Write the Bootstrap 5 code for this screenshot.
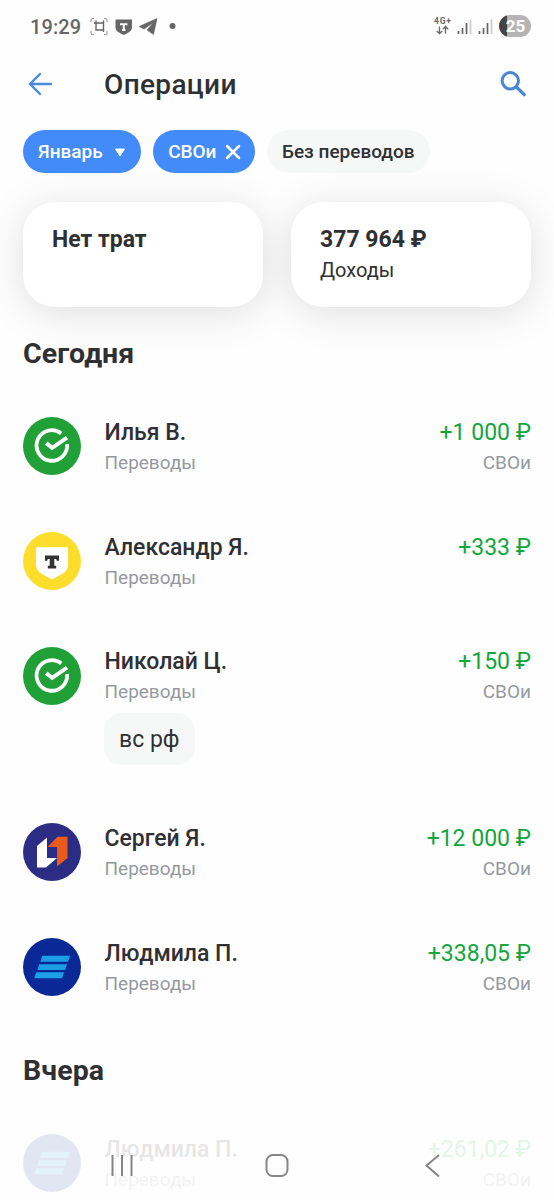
<!DOCTYPE html>
<html lang="ru">
<head>
<meta charset="utf-8">
<meta name="viewport" content="width=device-width, initial-scale=1">
<title>Операции</title>
<link href="https://cdn.jsdelivr.net/npm/bootstrap@5.3.0/dist/css/bootstrap.min.css" rel="stylesheet">
<style>
  body { font-family: Roboto, "Noto Sans", sans-serif; color: #2f3033; background: #fefefe; }
  .screen { width: 554px; height: 1200px; padding: 0 23px; }
  .screen svg { display: block; flex: none; }
  .status { height: 54px; padding: 0 0 1px 7px; color: #666; }
  .clock { font-size: 20px; line-height: 20px; letter-spacing: .1px; width: 60px; font-weight: 500; }
  .battery { width: 32px; height: 22px; margin-bottom: 2px; padding-left: 1px; font-size: 17px; line-height: 22px; letter-spacing: .1px; color: #fff; background: linear-gradient(90deg, #444 8px, #b4b4b4 8px); }
  .topbar { height: 60px; padding: 0 5px 0 5px; }
  .title { font-size: 28px; line-height: 60px; font-weight: 500; letter-spacing: .35px; margin: 1px 0 0 52px; }
  .chips { padding-top: 16px; gap: 12px; height: 88px; }
  .chip { height: 43px; padding: 0 15px; font-size: 19px; line-height: 43px; font-weight: 500; color: #fff; background: #428bf9; white-space: nowrap; }
  .chip-month { padding-right: 12.5px; }
  .chip-tag { padding-right: 12.5px; }
  .chip-plain { color: #2f3033; background: #f6f8f8; }
  .totals { gap: 28px; height: 105px; }
  .total { flex: 1; border-radius: 32px; background: #fff; padding: 22px 29px; box-shadow: 0 6px 40px rgba(0,0,0,.125); }
  .total-sum { font-size: 23px; line-height: 32px; font-weight: 700; white-space: nowrap; }
  .total-label { font-size: 20px; line-height: 28px; }
  .day { font-size: 28.5px; line-height: 80px; height: 80.6px; font-weight: 700; margin: 0; padding-top: 7px; letter-spacing: .1px; }
  .day-first { height: 80.5px; }
  .op { height: 115.3px; padding-top: 29px; gap: 23.5px; }
  .op-noted { height: 175.5px; }
  .op-noted > div { margin-top: -1.5px; }
  .op-name { font-size: 23px; line-height: 31px; font-weight: 500; }
  .op-sub { font-size: 19px; line-height: 29px; color: #9599a0; }
  .op-sum { font-size: 23px; line-height: 31px; color: #14a63c; white-space: nowrap; }
  .note { display: inline-block; margin: 7px 0 0 -.5px; height: 52px; padding: 0 15px; border-radius: 18px; background: #f6f8f8; font-size: 23px; line-height: 53px; }
  .faded { opacity: .11; }
  .sysnav { left: 0; top: 1140px; width: 554px; height: 50px; }
</style>
</head>
<body class="overflow-hidden">
<svg width="0" height="0" class="position-absolute" aria-hidden="true">
  <defs>
    <symbol id="sber" viewBox="0 0 58 58">
      <circle cx="29" cy="29" r="29" fill="#21a038"/>
      <path d="M38.300 16.400A15.300 15.300 0 1 0 44.100 27" fill="none" stroke="#fff" stroke-width="3.800"/>
      <path d="M23.200 26.200l6 4.600L44 20.700" fill="none" stroke="#fff" stroke-width="4"/>
    </symbol>
    <symbol id="tbank" viewBox="0 0 58 58">
      <circle cx="29" cy="29" r="29" fill="#ffdd2d"/>
      <path d="M13 15.300h32v17.200c0 4.200-1.800 7-5.200 9L29 47.600l-10.800-6.100c-3.400-2-5.200-4.800-5.200-9z" fill="#fff"/>
      <path d="M22 23.500h14v5.300h-2.200l-.6-1.700h-1.900v6.700h1.900v2.700h-8.400v-2.700h1.900v-6.700h-1.900l-.6 1.700H22z" fill="#333"/>
    </symbol>
    <symbol id="psb" viewBox="0 0 58 58">
      <circle cx="29" cy="29" r="29" fill="#2b2d84"/>
      <path d="M24 14.500V35h10L23 44.500H14V23z" fill="#fff"/>
      <path d="M34.500 13.800H44.500V35L34 43.500V24H24.500z" fill="#ea5b1b"/>
    </symbol>
    <symbol id="bars" viewBox="0 0 58 58">
      <circle cx="29" cy="29" r="29" fill="#0a2896"/>
      <path d="M19.300 17.800H47l-2 5.900H17.300zM16.300 26.200H44l-2 5.900H14.300zM13.300 34.300H41l-2 5.900H11.300z" fill="#1ba0e8"/>
    </symbol>
  </defs>
</svg>
<main class="screen position-relative overflow-hidden">
  <header class="status d-flex align-items-center">
    <span class="clock">19:29</span>
    <svg width="92" height="20" viewBox="0 0 92 20" fill="none" stroke="#666">
      <path d="M1 5V3q0-1.500 1.500-1.500H4M14 1.500h1.500Q17 1.500 17 3v2M17 14v2q0 1.500-1.500 1.500H14M4 17.500H2.500Q1 17.500 1 16v-2" stroke-width="1.100" stroke="#999"/>
      <path d="M6 3.500V13h7.500M4 6h9.500v9M13.500 6V3.500" stroke-width="1.400"/>
      <path d="M25.500 2.500h16.500v8.500q0 3.500-8.300 7-8.200-3.500-8.200-7z" fill="#666" stroke="none"/>
      <path d="M30 7.300h7.500M33.750 7.300v6M32 13h3.500" stroke="#fff" stroke-width="2"/>
      <path d="M49 9.500L67 1.500l-3.500 16-6.500-4.500 6.500-7.500-9.500 6.500z" fill="#666" stroke="#666" stroke-width=".6"/>
      <circle cx="82.500" cy="9" r="3" fill="#666" stroke="none"/>
    </svg>
    <svg class="ms-auto me-1" width="64" height="24" viewBox="0 0 64 24">
      <text x="3" y="9" font-family="Roboto, sans-serif" font-size="8.500" font-weight="700" fill="#666" textLength="17">4G+</text>
      <path d="M8.500 11.500v7M5.800 16l2.700 2.700 2.700-2.700M14.500 18.700v-7M11.800 14.200l2.700-2.700 2.700 2.700" fill="none" stroke="#666" stroke-width="1.300"/>
      <path d="M27.500 16v3M31.500 13v6M35.500 8v11M48.500 16v3M52.500 13v6M56.500 8v11" stroke="#666" stroke-width="1.700"/>
      <path d="M39.500 4.500v14.500M60.500 4.500v14.500" stroke="#ccc" stroke-width="1.700"/>
    </svg>
    <span class="battery rounded-pill text-center fw-bold">25</span>
  </header>

  <nav class="topbar d-flex align-items-center">
    <svg width="24" height="24" viewBox="0 0 24 24" fill="none" stroke="#4a89dc" stroke-width="2.400" stroke-linecap="round"><path d="M23 12H2.500M12 2L2 12l10 10"/></svg>
    <h1 class="title">Операции</h1>
    <svg class="ms-auto" width="26" height="26" viewBox="0 0 26 26" fill="none" stroke="#4a86d3"><circle cx="10.300" cy="9.800" r="8.200" stroke-width="3"/><path d="M16.500 16l7.700 7.700" stroke-width="3.200" stroke-linecap="round"/></svg>
  </nav>

  <section class="chips d-flex">
    <span class="chip chip-month rounded-pill d-flex align-items-center">Январь<svg class="ms-2" width="18" height="12" viewBox="0 0 18 12"><path d="M4.500 3h9L9 10z" fill="#fff" stroke="#fff" stroke-linejoin="round"/></svg></span>
    <span class="chip chip-tag rounded-pill d-flex align-items-center">СВОи<svg class="ms-2" width="18" height="18" viewBox="0 0 18 18"><path d="M3 3l12 12M15 3L3 15" stroke="#fff" stroke-width="2.500" stroke-linecap="round"/></svg></span>
    <span class="chip chip-plain rounded-pill">Без переводов</span>
  </section>

  <section class="totals d-flex">
    <div class="total"><div class="total-sum">Нет трат</div></div>
    <div class="total"><div class="total-sum">377 964 ₽</div><div class="total-label">Доходы</div></div>
  </section>

  <h2 class="day day-first position-relative">Сегодня</h2>
  <article class="op d-flex">
    <svg width="58" height="58"><use href="#sber"/></svg>
    <div class="flex-fill"><div class="op-name">Илья В.</div><div class="op-sub">Переводы</div></div>
    <div class="text-end"><div class="op-sum">+1 000 ₽</div><div class="op-sub">СВОи</div></div>
  </article>
  <article class="op d-flex">
    <svg width="58" height="58"><use href="#tbank"/></svg>
    <div class="flex-fill"><div class="op-name">Александр Я.</div><div class="op-sub">Переводы</div></div>
    <div class="text-end"><div class="op-sum">+333 ₽</div></div>
  </article>
  <article class="op op-noted d-flex">
    <svg width="58" height="58"><use href="#sber"/></svg>
    <div class="flex-fill"><div class="op-name">Николай Ц.</div><div class="op-sub">Переводы</div><div class="note">вс рф</div></div>
    <div class="text-end"><div class="op-sum">+150 ₽</div><div class="op-sub">СВОи</div></div>
  </article>
  <article class="op d-flex">
    <svg width="58" height="58"><use href="#psb"/></svg>
    <div class="flex-fill"><div class="op-name">Сергей Я.</div><div class="op-sub">Переводы</div></div>
    <div class="text-end"><div class="op-sum">+12 000 ₽</div><div class="op-sub">СВОи</div></div>
  </article>
  <article class="op d-flex">
    <svg width="58" height="58"><use href="#bars"/></svg>
    <div class="flex-fill"><div class="op-name">Людмила П.</div><div class="op-sub">Переводы</div></div>
    <div class="text-end"><div class="op-sum">+338,05 ₽</div><div class="op-sub">СВОи</div></div>
  </article>

  <h2 class="day">Вчера</h2>
  <article class="op d-flex faded">
    <svg width="58" height="58"><use href="#bars"/></svg>
    <div class="flex-fill"><div class="op-name">Людмила П.</div><div class="op-sub">Переводы</div></div>
    <div class="text-end"><div class="op-sum">+261,02 ₽</div><div class="op-sub">СВОи</div></div>
  </article>

  <footer class="sysnav position-absolute">
    <svg width="554" height="50" viewBox="0 0 554 50" fill="none" stroke="#858585" stroke-width="2">
      <path d="M112.500 15v21M122 15v21M131.500 15v21"/>
      <rect x="266.500" y="15" width="21" height="21" rx="6.500"/>
      <path d="M439 15l-12.500 10.500L439 36.500"/>
    </svg>
  </footer>
</main>
<script src="https://cdn.jsdelivr.net/npm/bootstrap@5.3.0/dist/js/bootstrap.bundle.min.js"></script>
</body>
</html>
